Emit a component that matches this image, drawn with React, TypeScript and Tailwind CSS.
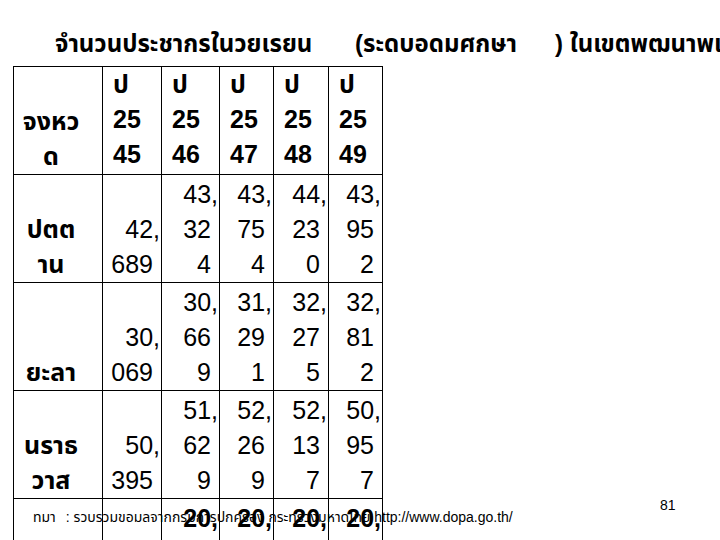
import React from 'react';

type Cell = string[];

interface Row {
  label: string[];
  values: Cell[];
}

const years = ['45', '46', '47', '48', '49'];

const rows: Row[] = [
  {
    label: ['ปตต', 'าน'],
    values: [
      ['42,', '689'],
      ['43,', '32', '4'],
      ['43,', '75', '4'],
      ['44,', '23', '0'],
      ['43,', '95', '2'],
    ],
  },
  {
    label: ['ยะลา'],
    values: [
      ['30,', '069'],
      ['30,', '66', '9'],
      ['31,', '29', '1'],
      ['32,', '27', '5'],
      ['32,', '81', '2'],
    ],
  },
  {
    label: ['นราธ', 'วาส'],
    values: [
      ['50,', '395'],
      ['51,', '62', '9'],
      ['52,', '26', '9'],
      ['52,', '13', '7'],
      ['50,', '95', '7'],
    ],
  },
];

const thai = { fontFamily: '"Liberation Sans", "Noto Sans Thai", "DejaVu Sans", sans-serif' };
const arial = { fontFamily: '"Liberation Sans", Arial, sans-serif' };

const Line = ({ text }: { text: string }) => {
  if (text.endsWith(',')) {
    return (
      <div className="h-[35px] leading-[35px] text-right">
        {text.slice(0, -1)}
        <span className="mr-[-7px]">,</span>
      </div>
    );
  }
  return <div className="h-[35px] leading-[35px] text-right">{text}</div>;
};

const widths = ['w-[89px]', 'w-[59px]', 'w-[58px]', 'w-[54px]', 'w-[55px]', 'w-[54px]'];

const App: React.FC = () => {
  return (
    <div className="relative w-[720px] h-[540px] overflow-hidden bg-white text-black">
      {/* title */}
      <div className="h-[66px] pt-[28px] flex whitespace-nowrap text-[24px] leading-[32px] font-bold" style={thai}>
        <span className="ml-[55px] w-[300px] shrink-0">จำนวนประชากรในวยเรยน</span>
        <span className="w-[200px] shrink-0">(ระดบอดมศกษา</span>
        <span className="shrink-0">) ในเขตพฒนาพเศษเฉพาะกจ</span>
      </div>

      <table className="ml-[13px] border-collapse table-fixed">
        <colgroup>
          {widths.map((w, i) => (
            <col key={i} className={w} />
          ))}
        </colgroup>
        <tbody>
          <tr className="h-[108px]">
            <td className="border-[1.5px] border-black align-bottom pl-[6px] pr-[20px] text-center text-[25px] font-bold" style={thai}>
              <div className="h-[35px] leading-[35px]">จงหว</div>
              <div className="h-[35px] leading-[35px]">ด</div>
            </td>
            {years.map((y) => (
              <td key={y} className="border-[1.5px] border-black align-top pl-[10px] text-[25px] font-bold" style={arial}>
                <div className="h-[35px] leading-[35px]" style={thai}>ป</div>
                <div className="h-[35px] leading-[35px]">25</div>
                <div className="h-[35px] leading-[35px]">{y}</div>
              </td>
            ))}
          </tr>
          {rows.map((r, ri) => (
            <tr key={ri} className="h-[108px]">
              <td className="border-[1.5px] border-black align-bottom pl-[6px] pr-[20px] text-center text-[25px] font-bold" style={thai}>
                {r.label.map((l) => (
                  <div key={l} className="h-[35px] leading-[35px]">{l}</div>
                ))}
              </td>
              {r.values.map((v, vi) => (
                <td key={vi} className="border-[1.5px] border-black align-bottom pr-[8px] text-[25px]" style={arial}>
                  {v.map((t, ti) => (
                    <Line key={ti} text={t} />
                  ))}
                </td>
              ))}
            </tr>
          ))}
          <tr className="h-[108px]">
            <td className="border-[1.5px] border-black" />
            <td className="border-[1.5px] border-black" />
            {[0, 1, 2, 3].map((i) => (
              <td key={i} className="border-[1.5px] border-black align-top pt-[2px] pr-[8px] text-[25px] font-bold" style={arial}>
                <Line text="20," />
              </td>
            ))}
          </tr>
        </tbody>
      </table>

      {/* source note, sits over the last row */}
      <div className="absolute left-[33px] top-[508px] text-[14px] leading-[18px] whitespace-nowrap" style={thai}>
        <span className="mr-[10px]">ทมา</span>
        <span>: รวบรวมขอมลจากกรมการปกครอง กระทรวงมหาดไทย http://www.dopa.go.th/</span>
      </div>

      <div className="absolute left-[660px] top-[496px] text-[14px] leading-[18px]" style={arial}>81</div>
    </div>
  );
};

export default App;
